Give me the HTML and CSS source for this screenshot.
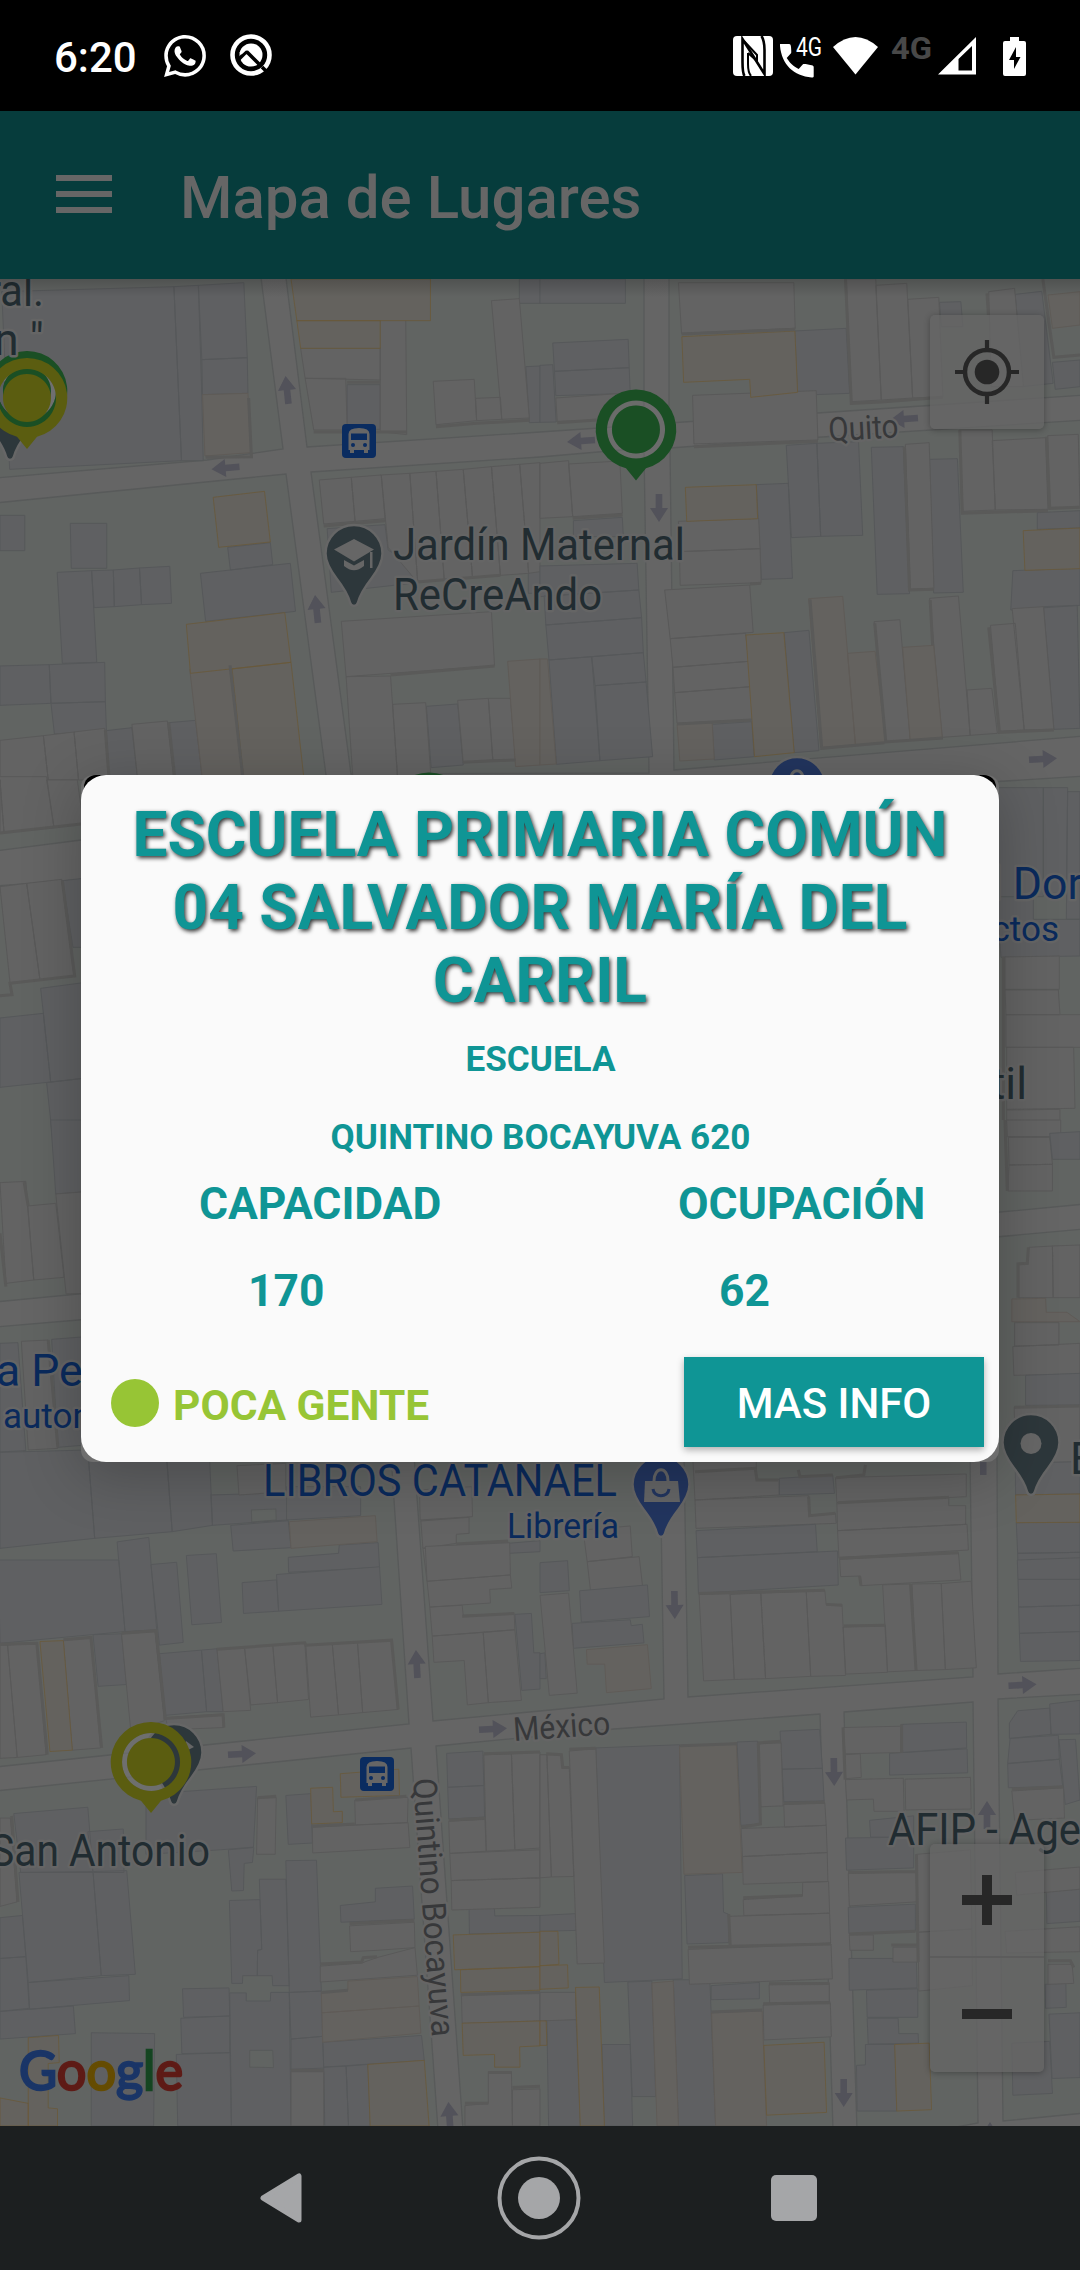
FILE: index.html
```html
<!DOCTYPE html>
<html lang="es">
<head>
<meta charset="utf-8">
<title>Mapa de Lugares</title>
<link rel="stylesheet" href="styles.css">
</head>
<body>
<header class="status">
  <span class="time">6:20</span>
  <svg class="ico-wa" width="42" height="42" viewBox="0 0 24 24" fill="#fff"><path d="M17.472 14.382c-.297-.149-1.758-.867-2.03-.967-.273-.099-.471-.148-.67.15-.197.297-.767.966-.94 1.164-.173.199-.347.223-.644.075-.297-.15-1.255-.463-2.39-1.475-.883-.788-1.48-1.761-1.653-2.059-.173-.297-.018-.458.13-.606.134-.133.298-.347.446-.52.149-.174.198-.298.298-.497.099-.198.05-.371-.025-.52-.075-.149-.669-1.612-.916-2.207-.242-.579-.487-.5-.669-.51-.173-.008-.371-.01-.57-.01-.198 0-.52.074-.792.372-.272.297-1.04 1.016-1.04 2.479 0 1.462 1.065 2.875 1.213 3.074.149.198 2.096 3.2 5.077 4.487.709.306 1.262.489 1.694.625.712.227 1.36.195 1.871.118.571-.085 1.758-.719 2.006-1.413.248-.694.248-1.289.173-1.413-.074-.124-.272-.198-.57-.347m-5.421 7.403h-.004a9.87 9.87 0 01-5.031-1.378l-.361-.214-3.741.982.998-3.648-.235-.374a9.86 9.86 0 01-1.51-5.26c.001-5.45 4.436-9.884 9.888-9.884 2.64 0 5.122 1.03 6.988 2.898a9.825 9.825 0 012.893 6.994c-.003 5.45-4.437 9.884-9.885 9.884m8.413-18.297A11.815 11.815 0 0012.05 0C5.495 0 .16 5.335.157 11.892c0 2.096.547 4.142 1.588 5.945L.057 24l6.305-1.654a11.882 11.882 0 005.683 1.448h.005c6.554 0 11.89-5.335 11.893-11.893a11.821 11.821 0 00-3.48-8.413Z"/></svg>
  <svg class="ico-q" width="42" height="42" viewBox="0 0 42 42"><circle cx="21" cy="21" r="18.500" fill="none" stroke="#fff" stroke-width="4.600"/><circle cx="21" cy="21" r="11.500" fill="#fff"/><path d="M9 25l8-8M16.500 17.500L29 30M32 33l7 7" stroke="#000" stroke-width="3.600" fill="none"/><path d="M10.500 19.500l5-4.500" stroke="#fff" stroke-width="3"/></svg>
  <div class="spacer"></div>
  <svg width="293" height="42" viewBox="733 34 293 42" fill="#fff">
    <rect x="733" y="35" width="40" height="40" rx="4"/>
    <path d="M744.500 75c-2-3-2-8-2-14V38L764.500 73V49c0-6-.5-10-3-14" fill="none" stroke="#000" stroke-width="2.600"/>
    <path d="M748 52v11c0 5 .5 9 3 12M748 52l9 8v-6L744 40" fill="none" stroke="#000" stroke-width="2"/>
    <path d="M780 43h9c1.500 0 1.800 1 2 3 .2 3 .4 5 .2 6l-4.500 5c4 6 7 8.500 12 11l4-4.500c1-.8 3-.3 9 .7 1.500.3 2 1 2 2v9.300c0 .5-.5 1-2 1-18-1.500-30-13-31.700-31.500z"/>
    <text class="g1" x="796" y="55" textLength="26" lengthAdjust="spacingAndGlyphs">4G</text>
    <path d="M833 46q22.500-20 45 0L855.500 73.500z"/>
    <text class="g2" x="891" y="58" textLength="41" lengthAdjust="spacingAndGlyphs">4G</text>
    <path d="M938 73.500L976 36v37.500zM958.500 58v11.500h13.500V45z" fill-rule="evenodd"/>
    <path d="M1010 36h9v4h5q2 0 2 2v31q0 2-2 2h-19q-2 0-2-2V42q0-2 2-2h5z"/><path d="M1016 46l-7 13h5v9l6.500-12h-4.500z" fill="#000"/>
  </svg>
</header>
<nav class="appbar">
  <div class="burger"><i></i><i></i><i></i></div>
  <h1>Mapa de Lugares</h1>
</nav>
<main class="map">
<svg class="canvas" viewBox="0 279 1080 1847" width="1080" height="1847">
  <defs>
    <path id="pin" d="M0-81c-15.700 0-28.500 12.800-28.500 28.500 0 9 5 17 11 25 7 9 11 15 13.500 24 1 4.500 7 4.500 8 0C6.500-12.500 10.500-18.500 17.500-27.500c6-8 11-16 11-25C28.500-68.200 15.700-81 0-81z"/>
    <path id="arw" d="M0-14L9 0H3.300V14h-6.600V0H-9z"/>
    <path id="drop" fill-rule="evenodd" d="M0-40a40 40 0 0 1 10 78.800L0 51l-10-12.200A40 40 0 0 1 0-40zM0-29a29 29 0 1 0 .1 0zM0-24a24 24 0 1 1-.1 0z"/>
    <g id="bus"><rect width="34" height="34" rx="4" fill="#0a2c60"/><path d="M6.500 10q0-6 10.500-6t10.500 6v16H26v3h-4v-3H12v3H8v-3H6.500z" fill="#666"/><path d="M9 9.500h16v6.500H9z" fill="#0a2c60"/><circle cx="11" cy="21" r="2" fill="#0a2c60"/><circle cx="23" cy="21" r="2" fill="#0a2c60"/></g>
    <g id="bag"><path d="M-16-56h33l2 21h-36z" fill="#646566"/><path d="M-7-56c0-15 14-15 14 0" fill="none" stroke="#646566" stroke-width="3"/><path d="M-8-48c1 9 15 9 16 0" fill="none" stroke="#22355f" stroke-width="3"/></g>
  </defs>
  <g class="block">
    <path d="M-5 270H260L283 449 207 460-5 478z"/>
    <path d="M285 270H644V425L540 432 307 447z"/>
    <path d="M669 270H1085V395L669 423z"/>
    <path d="M-5 503L286 474 326 775 335 820 81 840-5 851z"/>
    <path d="M311 472L540 457 644 448 649 773 351 774z"/>
    <path d="M670 448L807 438 1085 420V736L674 770z"/>
    <path d="M990 782L1085 776V1204L990 1213z"/>
    <path d="M996 1237L1085 1229V1668L998 1674z"/>
    <path d="M-5 886L90 879V1293L-5 1302z"/>
    <path d="M-5 1327L90 1319 390 1440 409 1724 205 1745-5 1767z"/>
    <path d="M414 1455H660L664 1699 540 1711 433 1721z"/>
    <path d="M684 1455H970L973 1677 688 1697z"/>
    <path d="M-5 1791L411 1748 438 2130H-5z"/>
    <path d="M436 1746L614 1729 820 1714 833 2130H463z"/>
    <path d="M844 1712L973 1702 978 2123 940 2130H857z"/>
    <path d="M998 1699L1085 1694V2113L1003 2121z"/>
  </g>
  <!-- plots, one group per tile -->
  <g transform="translate(0 260) scale(.34439 .33333)">
    <path class="b" d="M5 95 505 80 527 602 28 628zM505 80 576 76 586 405 590 602 527 602zM576 76 708 68 718 293 586 299zM586 299 718 293 720 400 588 404zM0 766 72 766 72 872 0 872zM204 790 310 790 310 925 207 925zM166 937 266 932 281 1207 181 1210zM266 932 329 930 332 1040 273 1043zM329 930 405 924 411 1034 332 1040zM405 924 493 919 498 1030 411 1034zM0 1218 143 1214 148 1330 0 1336zM143 1214 304 1207 306 1325 148 1330zM148 1330 306 1325 309 1412 158 1422zM309 1412 383 1403 400 1560 317 1560zM490 1388 568 1381 588 1560 505 1560zM661 862 785 848 792 914 669 930zM582 940 843 910 858 1054 597 1084zM1008 374 1104 374 1104 508 1008 508zM950 806 1118 794 1127 870 1213 930 1213 968 962 997zM1238 1339 1329 1332 1345 1515 1252 1523zM1534 920 1568 918 1568 1000 1534 1000zM1508 57 1568 57 1568 130 1508 130zM1527 320 1568 318 1568 487 1537 488z"/>
    <path class="w" d="M873 265 1104 265 1104 360 886 355zM886 355 1004 355 1008 510 911 510zM1104 160 1178 160 1181 524 1104 515zM1258 364 1377 358 1384 482 1266 494zM1381 415 1453 412 1457 478 1384 482zM1427 122 1508 116 1537 474 1457 478zM927 660 1020 652 1031 784 940 792zM1020 652 1107 645 1118 776 1031 784zM1107 645 1190 640 1213 968 1127 862zM1190 640 1266 634 1290 960 1213 968zM1266 634 1345 628 1372 952 1290 960zM1345 628 1427 620 1453 946 1372 952zM1427 620 1509 613 1535 940 1453 946zM1509 613 1568 608 1568 935 1535 940zM991 1084 1427 1055 1436 1217 1005 1250zM1005 1250 1134 1248 1155 1560 1025 1560zM1140 1333 1236 1328 1252 1560 1155 1560zM1329 1321 1418 1315 1431 1500 1345 1507zM1418 1315 1482 1315 1497 1500 1431 1500zM0 1441 126 1427 140 1560 0 1560zM126 1427 215 1416 228 1560 140 1560zM215 1416 304 1405 317 1560 228 1560zM383 1393 486 1383 505 1560 400 1560z"/>
    <path class="t" d="M588 404 720 400 728 578 595 588zM551 1228 666 1216 706 1560 588 1560zM1474 1204 1568 1197 1568 1515 1497 1520z"/>
    <path class="y" d="M845 57 1250 57 1250 182 862 182zM862 182 1104 182 1104 265 873 265zM619 712 768 694 785 846 635 862zM541 1093 827 1058 845 1207 553 1240zM674 1227 845 1207 883 1560 708 1560z"/>
    <path class="s" d="M911 516H1181M1008 367H1104M1266 500 1384 490 1537 481M940 798 1118 782M1210 966 1453 946M1134 1245 1436 1218M597 592 730 590 722 414M668 1216 706 1560M490 1388 508 1560M306 1410 317 1560M1345 1507 1431 1502 1497 1500"/>
  </g>
  <g transform="translate(540 260) scale(.34439 .33333)">
    <path class="b" d="M37 249 256 238 259 323 42 334zM42 334 259 323 262 400 46 407zM0 316 37 314 47 486 0 487zM740 213 889 205 899 400 748 406zM0 57 248 57 248 130 0 130zM715 556 804 550 815 829 730 833zM804 550 925 545 937 826 815 829zM962 562 1055 560 1073 1001 979 1003zM1131 598 1212 596 1229 997 1143 999zM628 674 721 670 733 955 643 958zM97 782 239 772 242 830 97 830zM0 918 282 910 287 990 0 1010zM12 1008 287 990 295 1073 17 1095zM17 1095 295 1073 300 1178 26 1200zM26 1200 150 1190 174 1502 48 1513zM150 1190 300 1178 308 1266 160 1277zM160 1277 308 1266 327 1490 174 1502zM500 1393 615 1385 622 1490 506 1500zM709 1118 781 1111 810 1472 738 1478zM1373 932 1568 925 1568 1036 1367 1050zM1462 1040 1560 1036 1568 1405 1492 1408zM1444 758 1568 752 1568 804 1444 808zM1160 127 1222 125 1228 200 1165 200zM1380 103 1457 94 1490 370 1400 380zM1488 307 1568 300 1568 380 1496 388z"/>
    <path class="w" d="M402 68 737 68 741 205 411 220zM443 406 802 392 807 540 447 552zM46 414 240 400 200 480 50 484zM889 57 975 57 991 420 904 425zM975 76 1065 70 1082 414 991 420zM1068 118 1158 112 1170 410 1082 414zM1303 95 1378 85 1404 380 1310 380zM1061 553 1130 548 1144 985 1075 988zM1218 510 1313 510 1322 750 1228 754zM1313 542 1468 533 1475 748 1322 750zM1474 527 1563 523 1568 742 1480 745zM83 612 232 603 239 760 95 770zM0 610 83 602 95 770 0 775zM402 784 635 776 639 866 405 875zM405 875 639 866 642 968 407 976zM362 990 609 975 619 1117 378 1136zM378 1136 597 1120 606 1204 386 1222zM386 1222 606 1204 612 1280 391 1298zM391 1298 612 1280 617 1378 398 1390zM970 1085 1045 1079 1075 1440 1004 1446zM1131 1015 1215 1008 1249 1426 1168 1432zM1240 1290 1312 1285 1328 1420 1249 1426zM1308 1096 1380 1090 1406 1410 1334 1414zM1371 1046 1462 1040 1492 1408 1406 1410z"/>
    <path class="t" d="M780 1016 879 1009 916 1455 815 1462zM893 1180 973 1174 1004 1446 916 1455zM1053 1162 1143 1156 1168 1432 1075 1440zM398 1393 500 1388 506 1497 406 1503zM1475 105 1568 95 1568 195 1488 205zM0 1197 22 1197 47 1512 0 1515z"/>
    <path class="y" d="M412 230 740 213 748 397 612 412 609 358 417 367zM422 682 628 674 632 776 426 784zM598 1125 708 1118 738 1478 623 1490zM1403 812 1568 804 1568 926 1408 931z"/>
    <path class="s" d="M411 222 741 208M887 57 904 430 990 426 1170 412M447 560 807 544M50 488 165 480M95 775 240 765M1222 760 1475 752M1219 510 1226 758M1058 560 1073 990 1144 988M1471 530 1480 745 1568 742M610 972 642 970M398 1392 615 1380M784 1018 818 1465 1000 1448M972 1090 1004 1446 1170 1434M1133 1020 1140 1156M1303 1102 1334 1417 1492 1410M1460 57 1492 292 1568 285M1298 100 1302 165"/>
  </g>
  <g transform="translate(0 760) scale(.33333)">
    <path class="w" d="M0 60 12 218 0 219zM-5 50 0 60 12 218 162 203 140 50zM140 60 162 203 250 192 232 60zM0 380 80 370 120 660 30 668zM80 370 185 358 222 648 120 660z"/>
    <path class="b" d="M187 362 250 355 250 562 219 562zM122 685 250 668 250 955 152 966zM0 774 130 760 152 966 0 982zM140 968 250 955 250 1140 158 1140z"/>
    <path class="s" d="M0 219 243 192M187 362 224 648 30 670 36 704 0 707"/>
  </g>
  <g transform="translate(560 760) scale(.33333)">
    <path class="b" d="M1310 83 1450 83 1450 410 1310 410zM1450 83 1523 83 1519 400 1450 400zM1523 95 1560 95 1560 478 1519 478zM1310 410 1420 410 1420 478 1560 478 1560 588 1323 592z"/>
    <path class="w" d="M1335 591 1498 588 1498 688 1335 688zM1335 690 1495 690 1500 764 1338 764zM1338 764 1570 764 1570 862 1338 862zM1340 862 1541 862 1545 1045 1340 1048zM1340 1050 1500 1048 1500 1090 1340 1090z"/>
    <path class="s" d="M1330 590V1080"/>
  </g>
  <g transform="translate(0 1120) scale(.34439 .33333)">
    <path class="b" d="M147 0 250 0 250 215 162 222zM0 670 52 668 75 992 0 996zM150 658 250 650 250 975 168 982zM0 997 255 990 275 1255 0 1285zM255 990 483 1000 500 1235 275 1255zM483 1000 608 1000 617 1216 500 1235zM612 1125 832 1118 832 1200 617 1216zM832 1100 1047 1100 1047 1187 832 1200zM670 1216 837 1202 845 1283 677 1293zM837 1312 983 1300 985 1275 1098 1268 1102 1342 838 1357z"/>
    <path class="w" d="M0 188 75 184 98 480 17 490zM80 258 162 250 186 472 98 480zM162 222 250 215 250 520 192 522zM62 664 140 660 168 985 82 990zM688 1037 830 1030 830 1115 694 1125zM1218 1110 1370 1100 1372 1190 1220 1200zM1222 1203 1362 1192 1362 1240 1325 1243 1325 1270 1228 1285zM1228 1285 1475 1265 1482 1363 1240 1384z"/>
    <path class="g" d="M730 1170 801 1167 802 1200 731 1206z"/>
    <path class="b" d="M1475 1270 1568 1262 1568 1295 1478 1300z"/>
    <path class="t" d="M840 1205 1090 1187 1095 1265 845 1285z"/>
    <path class="s" d="M70 186 82 258M0 340 17 500M140 660 168 982M1325 1272 1475 1263"/>
  </g>
  <g transform="translate(540 1120) scale(.34439 .33333)">
    <path class="w" d="M125 1230 262 1218 268 1310 137 1325zM137 1325 288 1310 298 1400 147 1415zM443 1000 628 1000 628 1078 695 1078 695 1125 450 1140zM450 1140 780 1127 783 1185 858 1180 860 1210 453 1225zM858 1073 1238 1062 1238 1130 862 1148zM862 1148 1187 1132 1187 1157 1236 1157 1236 1213 864 1232zM864 1232 1240 1213 1244 1290 868 1313zM870 1318 1215 1298 1222 1380 932 1397 930 1368 873 1370zM1355 0 1512 0 1512 50 1357 50zM1360 52 1480 52 1488 133 1362 135zM1362 135 1488 133 1488 213 1358 213zM1420 382 1488 378 1490 533 1390 533 1390 430 1412 430zM1488 378 1568 375 1568 533 1490 533zM1378 608 1507 608 1507 675 1378 678zM1373 680 1568 670 1568 762 1376 766zM1377 862 1568 858 1568 1025 1380 1030z"/>
    <path class="b" d="M0 1328 80 1322 85 1412 0 1418zM695 1075 850 1065 855 1120 695 1125zM453 1232 800 1213 805 1295 457 1313zM457 1313 864 1293 866 1395 460 1420zM1480 40 1568 35 1568 118 1488 118zM1410 766 1568 760 1568 855 1410 856zM1380 1030 1568 1025 1568 1122 1381 1125zM1383 1208 1568 1205 1568 1297 1387 1300zM1387 1300 1568 1297 1568 1380 1389 1383zM1389 1383 1568 1380 1568 1440 1390 1440z"/>
    <path class="t" d="M1370 537 1468 535 1470 577 1530 577 1568 605 1370 605z"/>
    <path class="y" d="M1381 1125 1568 1122 1568 1207 1383 1208z"/>
    <path class="s" d="M450 1055 625 1045 630 1080 692 1080M750 1050 755 1070 850 1065M860 1073 940 1065 945 1035M780 1130 783 1187 858 1180M864 1148 1187 1132M868 1315 1215 1298M932 1397 928 1368M1350 0 1357 213M1418 382 1415 430 1388 432 1388 533M1377 862 1568 858"/>
  </g>
  <g transform="translate(0 1560) scale(.34439 .45281)">
    <path class="b" d="M-5 0 345 0 363 158 0 184zM340 -40 432 -50 455 154 363 158zM438 10 513 5 532 182 463 188zM541 -10 628 -14 643 138 557 143zM703 50 803 44 809 113 707 118zM803 32 1102 15 1109 98 809 113zM463 207 585 199 600 335 480 343zM585 199 630 196 648 335 600 335zM270 165 353 163 367 275 285 279zM40 560 255 546 270 690 60 690zM424 540 480 514 745 500 736 634 640 640 424 650zM255 600 358 594 360 690 270 690zM55 690 270 688 294 918 82 933zM270 688 368 686 393 915 294 918zM0 790 65 785 75 876 0 880zM0 880 75 876 85 990 0 997zM82 933 374 918 376 973 86 992zM0 997 213 985 219 1046 0 1058zM663 640 737 635 733 668 709 670 707 730 673 731zM830 520 903 516 907 625 837 628zM830 664 919 663 933 952 840 955zM753 705 830 705 840 940 792 940 790 918 747 918 748 862 760 860zM666 752 755 750 760 860 748 862 747 918 705 918 704 935 673 935zM530 947 665 945 667 1007 533 1010zM525 1012 667 1007 667 1088 528 1090zM667 956 715 956 715 974 785 974 786 955 840 955 845 1250 672 1250zM512 1092 668 1088 672 1250 516 1250zM265 1044 449 1046 446 1250 265 1250zM840 955 933 952 937 1052 845 1058zM845 1058 937 1052 940 1122 845 1125zM937 1065 1224 1050 1232 1105 940 1120zM940 1120 1005 1118 1012 1250 943 1250zM1005 1118 1068 1114 1075 1250 1012 1250zM988 763 1090 755 1090 725 1198 720 1203 793 990 800zM1297 427 1402 422 1405 498 1300 502zM1300 502 1405 498 1407 568 1303 572zM1362 768 1435 765 1437 786 1568 785 1568 822 1363 826zM1495 120 1543 118 1550 205 1568 205 1568 285 1515 288z"/>
    <path class="g" d="M725 1083 792 1083 794 1121 725 1120z"/>
    <path class="w" d="M0 188 22 188 50 436 0 438zM22 188 107 184 134 430 50 436zM184 178 264 171 292 415 210 420zM353 163 450 158 477 355 380 380zM630 196 710 193 728 332 648 335zM710 193 792 188 806 315 728 320zM792 188 885 182 896 308 806 315zM888 188 965 186 983 342 902 347zM965 186 1038 182 1053 337 983 342zM1038 182 1137 177 1156 330 1053 337zM480 348 647 340 650 370 490 375zM748 525 802 525 799 650 745 650zM1030 530 1185 524 1183 580 1032 585zM907 590 1185 580 1190 635 908 647zM1015 808 1203 800 1205 856 1095 862 1018 865zM930 897 1050 890 1095 878 1205 856 1212 917 930 932zM845 1130 940 1130 940 1250 845 1250zM1235 -30 1480 -38 1482 33 1240 47zM1240 47 1482 33 1486 62 1422 65 1424 95 1248 104zM1248 104 1342 100 1345 122 1493 118 1495 154 1255 168zM1255 168 1403 160 1418 315 1357 320 1348 222 1260 226zM1403 160 1495 154 1514 310 1418 315zM1405 430 1485 428 1495 640 1412 643zM1485 428 1568 424 1568 636 1495 640zM1303 577 1408 573 1412 643 1306 648zM1306 648 1568 640 1568 702 1310 708zM1310 708 1568 702 1568 767 1312 773zM1340 962 1568 955 1568 1018 1342 1023zM1350 1205 1418 1200 1418 1130 1485 1130 1488 1250 1350 1250zM1488 1170 1568 1168 1568 1250 1488 1250zM0 570 30 570 50 755 0 765z"/>
    <path class="t" d="M933 955 1010 950 1010 930 1212 920 1217 985 935 1000zM935 1000 1217 985 1222 1045 937 1065z"/>
    <path class="y" d="M116 180 184 178 210 420 145 423zM902 504 966 502 968 556 994 555 994 580 905 583zM988 472 1158 462 1160 520 990 524zM1068 1114 1232 1105 1246 1250 1075 1250zM1316 828 1568 822 1568 898 1320 905zM1337 905 1568 898 1568 950 1338 955zM1342 1023 1568 1018 1568 1073 1509 1075 1510 1120 1436 1120 1436 1092 1345 1094zM82 1055 170 1050 172 1110 140 1112 140 1210 167 1212 167 1250 82 1250zM0 1188 82 1200 82 1250 0 1250z"/>
    <path class="s" d="M0 186 107 184 137 430M184 176 264 171 295 415M353 162 453 156 480 350 648 342 650 370M630 197 885 183 888 188 1137 177 1156 330M34 565 52 755M748 525 802 522M905 588 1030 583M1032 530 1180 522M1015 803 1203 796M930 892 1050 888 1055 878 1095 876M933 955 1010 950M1303 575 1408 570M1338 960 1568 955M1350 1200 1418 1200M1418 1132 1485 1132M1342 124 1493 118M845 1127 940 1127M1405 428 1568 424M1488 1165 1568 1162"/>
  </g>
  <g transform="translate(540 1560) scale(.34439 .45281)">
    <path class="b" d="M115 68 312 55 318 125 120 137zM93 140 262 132 265 145 297 142 302 183 97 195zM0 207 14 205 18 262 0 262zM162 415 405 408 413 925 187 933zM572 402 632 400 640 583 583 586zM697 378 812 374 820 460 703 462zM703 462 820 460 825 532 708 534zM420 697 530 693 533 778 547 782 549 845 427 848zM255 932 325 930 336 1185 268 1185zM387 927 493 927 497 1000 510 1250 402 1250zM497 940 637 933 637 969 497 971zM180 1070 262 1070 269 1250 187 1250zM20 1015 105 1015 117 1250 25 1250zM0 785 103 781 105 818 0 820zM1050 363 1238 358 1239 415 1053 425zM1015 427 1240 417 1242 470 1015 475zM957 575 1085 565 1085 612 960 612zM887 614 1085 612 1085 680 890 685zM895 767 1090 760 1090 820 897 825zM897 880 1093 880 1095 945 898 950zM948 950 1097 947 1097 1010 950 1010zM950 1012 1040 1012 1042 1046 1098 1046 1099 1067 953 1069zM945 1070 1030 1070 1036 1217 921 1217 919 1116 945 1115zM1386 0 1568 -5 1568 43 1388 43zM1388 43H1568V100L1390 104zM1390 104 1568 100V158L1392 162zM1392 162 1568 158V222L1395 224zM1363 360 1387 333 1480 327 1484 385 1363 394zM1480 318 1568 310 1568 384 1484 385zM1365 394 1505 387 1508 440 1358 449zM1358 450 1508 440 1518 500 1360 503zM1507 397 1555 396 1568 530 1525 540zM1470 732 1568 727 1568 798 1472 803zM1478 1003 1568 1000 1568 1143 1487 1145zM1370 1067 1480 1063 1488 1178 1373 1182zM1467 937 1527 935 1528 988 1468 990z"/>
    <path class="w" d="M0 78 83 73 108 294 27 299zM462 76 552 74 564 264 475 267zM552 76 641 73 655 262 564 264zM641 73 773 69 786 257 655 262zM773 69 827 67 831 99 877 98 887 255 786 257zM880 148 1003 144 1009 248 888 252zM995 55 1076 53 1092 244 1009 247zM1080 53 1165 52 1177 242 1092 244zM1165 52 1252 47 1267 238 1177 242zM0 430 20 430 33 700 0 702zM20 430 62 430 66 457 85 458 98 699 33 700zM85 422 162 416 187 890 108 892zM634 406 700 404 706 543 641 545zM708 540 827 536 831 586 710 590zM584 593 831 586 834 646 588 655zM588 655 834 646 836 710 590 716zM590 750 762 742 763 712 838 710 841 780 592 785zM548 787 841 780 844 846 552 854zM430 860 845 848 849 925 434 937zM665 938 840 935 840 975 667 979zM648 983 843 978 846 1053 650 1060zM880 370 1050 367 1053 425 886 428zM886 430 930 428 933 480 887 483zM887 485 1055 482 1057 555 970 555 968 528 890 530zM1060 484 1250 480 1252 550 1062 552zM895 692 1092 688 1094 755 898 764zM898 828 968 828 968 862 900 862zM1025 855 1098 855 1098 888 1025 888zM1370 510 1520 503 1523 570 1378 575zM1380 690 1568 678 1568 727 1384 740zM1350 820 1568 810 1568 865 1355 868zM1475 893 1545 893 1550 935 1475 937zM0 955 103 955 105 1015 0 1018zM1093 650 1250 640 1254 815 1098 822zM1098 822 1254 815 1256 940 1100 952z"/>
    <path class="t" d="M405 412 570 404 587 690 418 694zM325 934 387 930 402 1250 340 1250zM498 1000 645 996 658 1250 510 1250zM135 198 312 187 323 284 193 293 188 230 137 230z"/>
    <path class="y" d="M650 1072 825 1065 832 1220 658 1226zM1030 1070 1130 1067 1137 1214 1036 1217zM103 944 172 943 187 1250 117 1250zM0 820 52 820 55 893 0 896zM0 896 80 894 82 945 0 948zM0 1018 18 1018 20 1072 0 1072z"/>
    <path class="s" d="M460 74 827 67M831 98 877 100M882 146 1003 144M1076 53 1092 244M18 428 62 430 66 458 85 458M85 418 162 416M407 410 572 406M634 404 640 583 584 590M632 404 700 400M708 538 827 535M590 746 762 741M548 782 552 850M430 855 845 848M498 998 645 994M648 980 843 978M665 936 840 935M880 370 886 485M1050 363 1050 425M895 690 1092 688M898 826 1090 820M1020 850 1098 850M1370 506 1520 501M1093 650 1098 888M1475 885 1540 885 1550 900"/>
  </g>
  <g fill="#52525a">
    <use href="#arw" transform="translate(287 390) rotate(-6)"/><use href="#arw" transform="translate(225.500 468) rotate(-95)"/><use href="#arw" transform="translate(316.500 609) rotate(-6)"/><use href="#arw" transform="translate(581 441) rotate(-94)"/><use href="#arw" transform="translate(659 508) rotate(180)"/><use href="#arw" transform="translate(904 419) rotate(-94)"/><use href="#arw" transform="translate(1043 759) rotate(87)"/><use href="#arw" transform="translate(416.700 1664) rotate(-3)"/><use href="#arw" transform="translate(242 1754) rotate(87)"/><use href="#arw" transform="translate(493 1729) rotate(87)"/><use href="#arw" transform="translate(449.400 2116) rotate(-4)"/><use href="#arw" transform="translate(674.600 1605) rotate(179)"/><use href="#arw" transform="translate(834 1772) rotate(179)"/><use href="#arw" transform="translate(1022.500 1685) rotate(87)"/><use href="#arw" transform="translate(987 1815)"/><use href="#arw" transform="translate(843.700 2093) rotate(180)"/><use href="#arw" transform="translate(990 2136)"/><path d="M980 1455h6.500v20H980z"/>
  </g>
  <use href="#bus" x="342" y="424"/>
  <use href="#bus" x="360" y="1757"/>
  <circle cx="151" cy="1762" r="26.500" fill="none" stroke="#767676" stroke-width="5" opacity=".6"/>
  <g stroke="#666" stroke-width="2.500">
    <use href="#pin" x="10" y="460" fill="#2d373b"/>
    <use href="#pin" x="354" y="606" fill="#2d373b"/>
    <use href="#pin" x="1031" y="1495" fill="#2d373b"/>
    <use href="#pin" x="174" y="1805" fill="#2d373b"/>
    <use href="#pin" x="661" y="1537" fill="#22355f"/>
    <use href="#pin" x="797" y="838" fill="#22355f"/>
  </g>
  <circle cx="1031" cy="1443.500" r="10.500" fill="#666"/>
  <path d="M354 539l20 10.500-20 12-20-12zM344 560l10 5.500 10-5.500v6q-10 8.500-20 0zM370 552h2.500v16H370z" fill="#666"/>
  <path d="M186 1741l8 6-12 6z" fill="#666"/>
  <use href="#bag" x="661" y="1537"/><use href="#bag" x="797" y="838"/>
  <g fill="none" stroke="#7a7a7a" stroke-width="5"><circle cx="636" cy="429.500" r="26.500" opacity=".35"/><circle cx="27" cy="391" r="26.500" opacity=".6"/></g>
  <use href="#drop" x="636" y="429.500" fill="#1a4f24"/>
  <use href="#drop" x="429" y="812.500" fill="#1a4f24"/>
  <use href="#drop" x="27" y="391" fill="#1a4f24"/>
  <use href="#drop" x="27" y="398" fill="#5b5d10"/>
  <use href="#drop" x="151" y="1762" fill="#5b5d10"/>
  <g class="lbl dark">
    <text x="-13" y="306" textLength="57" lengthAdjust="spacingAndGlyphs">ral.</text>
    <text x="-6" y="355">n "</text>
    <text x="393" y="560" textLength="292" lengthAdjust="spacingAndGlyphs">Jardín Maternal</text>
    <text x="393" y="610" textLength="209" lengthAdjust="spacingAndGlyphs">ReCreAndo</text>
    <text x="1027" y="1099" text-anchor="end">til</text>
    <text x="1070" y="1474">E</text>
    <text x="-10" y="1866" textLength="220" lengthAdjust="spacingAndGlyphs">San Antonio</text>
    <text x="888" y="1845" textLength="193" lengthAdjust="spacingAndGlyphs">AFIP - Age</text>
  </g>
  <g class="lbl blue">
    <text x="991" y="899">l Dora</text>
    <text x="-4" y="1386">a Peu</text>
    <text x="263" y="1496" textLength="354" lengthAdjust="spacingAndGlyphs">LIBROS CATANAEL</text>
    <g class="sm">
      <text x="1059" y="941" text-anchor="end">ctos</text>
      <text x="3" y="1427.500">autom</text>
      <text x="507" y="1538" textLength="112" lengthAdjust="spacingAndGlyphs">Librería</text>
    </g>
  </g>
  <g class="lbl street">
    <text transform="translate(829 441) rotate(-3)" textLength="70" lengthAdjust="spacingAndGlyphs">Quito</text>
    <text transform="translate(514 1741) rotate(-4)" textLength="97" lengthAdjust="spacingAndGlyphs">México</text>
    <text transform="translate(413 1779) rotate(85.800)" textLength="259" lengthAdjust="spacingAndGlyphs">Quintino Bocayuva</text>
  </g>
  <text class="logo" x="19" y="2090" textLength="164" lengthAdjust="spacingAndGlyphs"><tspan class="l1">G</tspan><tspan class="l2">o</tspan><tspan class="l3">o</tspan><tspan class="l1">g</tspan><tspan class="l4">l</tspan><tspan class="l2">e</tspan></text>
</svg>
<div class="topshade"></div>
<button class="ctl locate" aria-label="Mi ubicación"><svg width="64" height="64" viewBox="-32 -32 64 64"><circle r="22" fill="none" stroke="#272727" stroke-width="4.500"/><circle r="12.300" fill="#272727"/><path d="M0-32v10M0 22v10M-32 0h10M22 0h10" stroke="#272727" stroke-width="4.200"/></svg></button>
<div class="ctl zoom">
  <button aria-label="Acercar"><svg width="50" height="50"><path d="M20 0h10v20h20v10H30v20H20V30H0V20h20z" fill="#272727"/></svg></button>
  <button aria-label="Alejar"><svg width="50" height="10"><path d="M0 0h50v10H0z" fill="#272727"/></svg></button>
</div>
<section class="dialog">
  <div class="card">
    <h2>ESCUELA PRIMARIA COMÚN<br>04 SALVADOR MARÍA DEL<br>CARRIL</h2>
    <p class="kind">ESCUELA</p>
    <p class="addr">QUINTINO BOCAYUVA 620</p>
    <div class="row heads"><span>CAPACIDAD</span><span>OCUPACIÓN</span></div>
    <div class="row vals"><span>170</span><span>62</span></div>
    <div class="foot"><i class="dot"></i><span class="level">POCA GENTE</span><button class="more">MAS INFO</button></div>
  </div>
</section>
</main>
<footer class="sysnav">
  <svg width="42" height="50" viewBox="0 0 42 50"><path d="M39 3v44L3 25z" fill="#a5a6a8" stroke="#a5a6a8" stroke-width="5" stroke-linejoin="round"/></svg>
  <svg class="home" width="84" height="84" viewBox="-42 -42 84 84"><circle r="39.500" fill="none" stroke="#a5a6a8" stroke-width="4"/><circle r="21" fill="#a5a6a8"/></svg>
  <i class="recent"></i>
</footer>
</body>
</html>
```
FILE: styles.css
```css
* { box-sizing: border-box; }
body { margin: 0; width: 1080px; height: 2270px; display: flex; flex-direction: column; font-family: Roboto, sans-serif; overflow: hidden; background: #000; }
h1, h2, p { margin: 0; }
button { border: 0; padding: 0; background: none; font-family: inherit; display: flex; align-items: center; justify-content: center; }

.status { height: 111px; padding: 0 54px; display: flex; align-items: center; background: #000; color: #fff; }
.status svg { overflow: visible; }
.time { width: 84px; font-size: 42px; font-weight: 500; line-height: 48px; padding-top: 4px; }
.ico-wa { margin-left: 26px; }
.ico-q { margin-left: 24px; margin-top: -2px; }
.spacer { flex: 1; }
.g1 { font-size: 25px; fill: #fff; }
.g2 { font-size: 31px; font-weight: 700; fill: #484848; }

.appbar { height: 168px; padding-left: 56px; display: flex; align-items: center; gap: 68px; background: #063c3c; }
.burger { width: 56px; display: flex; flex-direction: column; gap: 10px; margin-top: -3px; }
.burger i { height: 6px; background: #666; }
.appbar h1 { font-size: 60px; font-weight: 500; line-height: 70px; color: #666; padding-top: 5px; white-space: nowrap; }

.map { position: relative; flex: 1; overflow: hidden; background: #656565; }
.canvas { display: block; background: #656565; }
.block path, .b, .w, .t, .y, .g, .s { vector-effect: non-scaling-stroke; stroke-width: 1; stroke: #585a5a; }
.block path { fill: #616462; stroke-width: 1.300; }
.b { fill: #5f6062; stroke: #56585a; }
.w { fill: #636363; stroke: #595959; }
.t { fill: #64625f; stroke: #5f5b57; }
.y { fill: #64625e; stroke: #69593a; stroke-width: .8; }
.g { fill: #616462; }
.s { fill: none; stroke: #5a5a59; stroke-width: 3; }
.lbl { font-size: 44.500px; paint-order: stroke; stroke: #656565; stroke-width: 5px; stroke-linejoin: round; }
.dark { fill: #212c31; }
.blue { fill: #0a2a5c; }
.sm { font-size: 35px; }
.street { font-size: 33px; fill: #37383a; }
.logo { font-family: Lato, sans-serif; font-size: 54px; font-weight: 400; stroke-width: 2.400px; }
.l1 { fill: #1a3567; stroke: #1a3567; }
.l2 { fill: #5e1b16; stroke: #5e1b16; }
.l3 { fill: #654c02; stroke: #654c02; }
.l4 { fill: #154521; stroke: #154521; }

.topshade { position: absolute; left: 0; top: 0; width: 100%; height: 18px; background: linear-gradient(rgba(0,0,0,.18), transparent); }
.ctl { position: absolute; left: 930px; width: 114px; border-radius: 5px; background: rgba(102,102,102,.75); box-shadow: 0 1px 6px rgba(0,0,0,.3); }
.locate { top: 36px; height: 114px; }
.zoom { top: 1565px; height: 228px; display: flex; flex-direction: column; }
.zoom button { flex: 1; }
.zoom button + button { border-top: 2px solid #5c5c5c; padding-bottom: 2px; }

.dialog { position: absolute; left: 81px; top: 496px; width: 918px; height: 687px; border-radius: 12px; background: #6e6e6e; box-shadow: 0 12px 60px rgba(0,0,0,.24); }
.dialog::before { content: ""; position: absolute; left: 3px; right: 3px; top: 0; height: 40px; border-radius: 12px 12px 0 0; background: #000; }
.card { position: relative; height: 100%; padding: 23px 15px 15px 0; border-radius: 25px; background: #fafafa; color: #0f9595; display: flex; flex-direction: column; font-weight: 700; }
h2 { padding-left: 15px; text-align: center; font-size: 62.200px; line-height: 73px; white-space: nowrap; text-shadow: 1.500px 1.500px 4px rgba(0,0,0,.8); }
.kind, .addr { padding-left: 16px; text-align: center; font-size: 35.100px; line-height: 42px; }
.kind { margin-top: 21px; }
.addr { margin-top: 36px; }
.row { display: grid; font-size: 44.400px; line-height: 53px; }
.heads { margin-top: 20px; padding-left: 118px; grid-template-columns: 479px 1fr; }
.vals { margin-top: 34px; padding-left: 167px; grid-template-columns: 471px 1fr; }
.foot { margin-top: auto; height: 90px; padding-left: 30px; display: flex; align-items: center; }
.dot { width: 48px; height: 48px; border-radius: 50%; background: #97c535; margin-top: 1px; }
.level { margin-left: 14px; font-size: 42.500px; line-height: 49px; padding-top: 6px; color: #97c535; white-space: nowrap; }
.more { margin-left: auto; width: 300px; height: 90px; background: #0f9595; color: #fff; font-size: 42px; font-weight: 500; box-shadow: 0 3px 7px rgba(0,0,0,.3); padding-top: 3px; }

.sysnav { height: 144px; padding: 0 263px 0 260px; display: flex; align-items: center; justify-content: space-between; background: #1c1f20; }
.home { margin-left: 5px; }
.recent { width: 46px; height: 46px; border-radius: 5px; background: #a5a6a8; }
```
